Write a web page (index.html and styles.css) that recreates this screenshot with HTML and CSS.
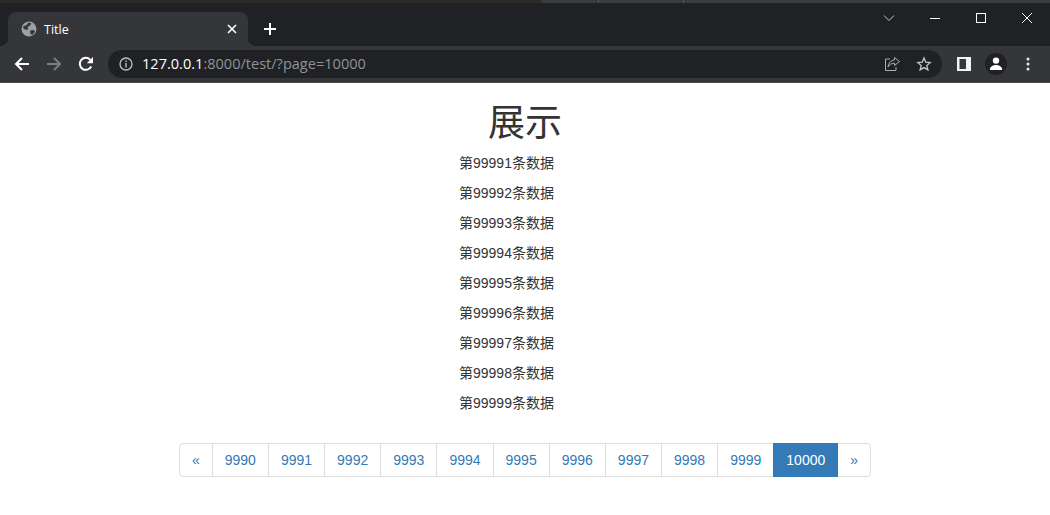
FILE: index.html
```html
<!DOCTYPE html>
<html lang="zh-CN">
<head>
    <meta charset="UTF-8">
    <title>Title</title>
    <link rel="stylesheet" href="styles.css">
</head>
<body>
    <header class="browser">
        <div class="top-strip">
            <div class="strip-dark"></div>
            <div class="strip-seg strip-first"></div>
            <div class="strip-seg strip-second"></div>
            <div class="strip-seg strip-last"></div>
        </div>
        <div class="tabbar">
            <div class="tab">
                <svg class="globe" width="16" height="16" viewBox="0 0 16 16">
                    <circle cx="8" cy="8" r="7.5" fill="#9aa0a6"/>
                    <path d="M2 5.5 L5.5 4 L7.5 1.5 L10.5 2.5 L9 4.5 L6.5 6 L7.5 8 L5 9 L2.5 7.5 Z M9 9.5 L12.5 9 L14 10.5 L11.5 14 L9.5 13 Z" fill="#35363a"/>
                </svg>
                <span class="tab-title">Title</span>
                <svg class="tab-close" width="10" height="10" viewBox="0 0 10 10">
                    <path d="M1 1 L9 9 M9 1 L1 9" stroke="#fff" stroke-width="1.6" fill="none"/>
                </svg>
            </div>
            <svg class="new-tab" width="14" height="14" viewBox="0 0 14 14">
                <path d="M7 1 V13 M1 7 H13" stroke="#fff" stroke-width="2" fill="none"/>
            </svg>
            <div class="window-btns">
                <svg class="win-chevron" width="12" height="8" viewBox="0 0 12 8">
                    <path d="M1 1.5 L6 6.5 L11 1.5" stroke="#c8c9cb" stroke-width="1" fill="none"/>
                </svg>
                <svg class="win-icon" width="12" height="12" viewBox="0 0 12 12">
                    <path d="M1 6.5 H11" stroke="#fff" stroke-width="1" fill="none"/>
                </svg>
                <svg class="win-icon" width="12" height="12" viewBox="0 0 12 12">
                    <rect x="1.5" y="1.5" width="9" height="9" stroke="#fff" stroke-width="1" fill="none"/>
                </svg>
                <svg class="win-icon" width="12" height="12" viewBox="0 0 12 12">
                    <path d="M1 1 L11 11 M11 1 L1 11" stroke="#fff" stroke-width="1" fill="none"/>
                </svg>
            </div>
        </div>
        <div class="toolbar">
            <svg class="nav-icon" width="16" height="16" viewBox="0 0 16 16">
                <path d="M15 8 H2 M8 2 L2 8 L8 14" stroke="#fff" stroke-width="2" fill="none"/>
            </svg>
            <svg class="nav-icon" width="16" height="16" viewBox="0 0 16 16">
                <path d="M1 8 H14 M8 2 L14 8 L8 14" stroke="#7c7e81" stroke-width="2" fill="none"/>
            </svg>
            <svg class="nav-icon" width="16" height="16" viewBox="0 0 16 16">
                <path d="M13.2 10.5 A6 6 0 1 1 12.3 3.8" stroke="#fff" stroke-width="2" fill="none"/>
                <path d="M15 1 V7.2 H8.8 Z" fill="#fff"/>
            </svg>
            <div class="omnibox">
                <svg class="info" width="14" height="14" viewBox="0 0 14 14">
                    <circle cx="7" cy="7" r="6" stroke="#bdc1c6" stroke-width="1.3" fill="none"/>
                    <path d="M7 6 V10.5 M7 3.4 V4.9" stroke="#bdc1c6" stroke-width="1.4" fill="none"/>
                </svg>
                <span class="url"><span class="url-host">127.0.0.1</span>:8000/test/?page=10000</span>
                <svg class="omni-icon" width="16" height="16" viewBox="0 0 16 16">
                    <path d="M6 3 H1.5 V14.5 H12 V11" stroke="#a9adb2" stroke-width="1" fill="none"/>
                    <path d="M10.5 1.5 L15.5 5.5 L10.5 9.5 V7.2 C7.5 7.2 5.5 8.5 4 11 C4.3 7 6.8 4.3 10.5 3.9 Z" stroke="#a9adb2" stroke-width="1" fill="none"/>
                </svg>
                <svg class="omni-icon" width="16" height="16" viewBox="0 0 16 16">
                    <path d="M8 2 L9.8 6.2 L14.2 6.6 L10.8 9.6 L11.9 13.9 L8 11.6 L4.1 13.9 L5.2 9.6 L1.8 6.6 L6.2 6.2 Z" stroke="#c4c7cb" stroke-width="1.3" fill="none"/>
                </svg>
            </div>
            <svg class="side-icon" width="14" height="14" viewBox="0 0 14 14">
                <path d="M0 0 H14 V14 H0 Z M2.5 2 V12 H9 V2 Z" fill="#f1f3f4" fill-rule="evenodd"/>
            </svg>
            <div class="avatar">
                <svg width="14" height="14" viewBox="0 0 14 14">
                    <circle cx="7" cy="3.6" r="3.2" fill="#fff"/>
                    <path d="M0.8 13 C0.8 9.5 4 8 7 8 C10 8 13.2 9.5 13.2 13 Z" fill="#fff"/>
                </svg>
            </div>
            <svg class="menu-icon" width="4" height="14" viewBox="0 0 4 14">
                <circle cx="2" cy="2" r="1.5" fill="#e8eaed"/>
                <circle cx="2" cy="7" r="1.5" fill="#e8eaed"/>
                <circle cx="2" cy="12" r="1.5" fill="#e8eaed"/>
            </svg>
        </div>
    </header>

    <main class="page">
        <h1>展示</h1>
        <div class="records">
            <p>第99991条数据</p>
            <p>第99992条数据</p>
            <p>第99993条数据</p>
            <p>第99994条数据</p>
            <p>第99995条数据</p>
            <p>第99996条数据</p>
            <p>第99997条数据</p>
            <p>第99998条数据</p>
            <p>第99999条数据</p>
        </div>
        <ul class="pagination">
            <li><a href="#">«</a></li>
            <li><a href="#">9990</a></li>
            <li><a href="#">9991</a></li>
            <li><a href="#">9992</a></li>
            <li><a href="#">9993</a></li>
            <li><a href="#">9994</a></li>
            <li><a href="#">9995</a></li>
            <li><a href="#">9996</a></li>
            <li><a href="#">9997</a></li>
            <li><a href="#">9998</a></li>
            <li><a href="#">9999</a></li>
            <li class="active"><a href="#">10000</a></li>
            <li><a href="#">»</a></li>
        </ul>
    </main>
</body>
</html>
```

FILE: styles.css
```css
* {
    box-sizing: border-box;
}

body {
    margin: 0;
    background: #fff;
    color: #333;
    font-family: "Liberation Sans", "Noto Sans CJK SC", sans-serif;
    font-size: 14px;
    line-height: 20px;
    overflow: hidden;
}

/* browser window */
.browser {
    height: 83px;
    background: #202124;
    border-bottom: 1px solid #4a4b4e;
    font-family: "Open Sans", sans-serif;
}

.top-strip {
    display: flex;
    height: 3px;
}

.strip-dark {
    width: 541px;
    background: #2a2a28;
}

.strip-seg {
    background: #3a3b3d;
    border-right: 1px solid #55565a;
}

.strip-first {
    width: 58px;
}

.strip-second {
    width: 85px;
}

.strip-last {
    flex: 1;
    border-right: 0;
}

.tabbar {
    display: flex;
    align-items: flex-end;
    height: 43px;
    padding-left: 8px;
}

.tab {
    position: relative;
    display: flex;
    align-items: center;
    width: 240px;
    height: 34px;
    padding: 0 11px 0 13px;
    background: #35363a;
    border-radius: 8px 8px 0 0;
}

.tab::before,
.tab::after {
    content: "";
    position: absolute;
    bottom: 0;
    width: 8px;
    height: 8px;
}

.tab::before {
    left: -8px;
    background: radial-gradient(circle at 0 0, #202124 8px, #35363a 8.5px);
}

.tab::after {
    right: -8px;
    background: radial-gradient(circle at 100% 0, #202124 8px, #35363a 8.5px);
}

.tab-title {
    flex: 1;
    margin-left: 7px;
    padding-top: 1px;
    color: #fff;
    font-size: 12.5px;
}

.new-tab {
    margin: 0 0 10px 15px;
}

.window-btns {
    display: flex;
    align-items: center;
    align-self: flex-start;
    gap: 34px;
    margin-left: auto;
    padding: 9px 17px 0 0;
}

.toolbar {
    display: flex;
    align-items: center;
    height: 36px;
    padding-left: 14px;
    background: #35363a;
}

.nav-icon {
    flex: none;
    margin-right: 16px;
}

.omnibox {
    display: flex;
    align-items: center;
    width: 834px;
    height: 28px;
    margin-left: -2px;
    padding: 0 10px 0 11px;
    background: #202124;
    border-radius: 14px;
}

.info {
    flex: none;
}

.url {
    flex: 1;
    margin-left: 9px;
    padding-bottom: 2px;
    color: #8f9398;
    font-size: 14.56px;
}

.url-host {
    color: #fff;
}

.omni-icon {
    flex: none;
    margin-left: 16px;
}

.side-icon {
    flex: none;
    margin-left: 15px;
}

.avatar {
    display: flex;
    align-items: center;
    justify-content: center;
    flex: none;
    width: 22px;
    height: 22px;
    margin-left: 14px;
    background: #202124;
    border-radius: 50%;
}

.menu-icon {
    flex: none;
    margin-left: 19px;
}

/* page */
.page {
    text-align: center;
}

h1 {
    margin: 21px 0 9px;
    font-size: 37px;
    font-weight: 400;
    line-height: 39.6px;
}

.records {
    width: 132px;
    margin: 0 auto;
    text-align: left;
}

.records p {
    margin: 0 0 10px;
}

.pagination {
    display: inline-flex;
    margin: 20px 0;
    padding: 0;
    list-style: none;
    vertical-align: top;
}

.pagination a {
    display: block;
    margin-left: -1px;
    padding: 6px 12px;
    background: #fff;
    border: 1px solid #ddd;
    color: #337ab7;
    text-decoration: none;
    box-sizing: content-box;
}

.pagination li:first-child a {
    margin-left: 0;
    border-radius: 4px 0 0 4px;
}

.pagination li:last-child a {
    border-radius: 0 4px 4px 0;
}

.pagination .active {
    position: relative;
    z-index: 1;
}

.pagination .active a {
    background: #337ab7;
    border-color: #337ab7;
    color: #fff;
}
```
